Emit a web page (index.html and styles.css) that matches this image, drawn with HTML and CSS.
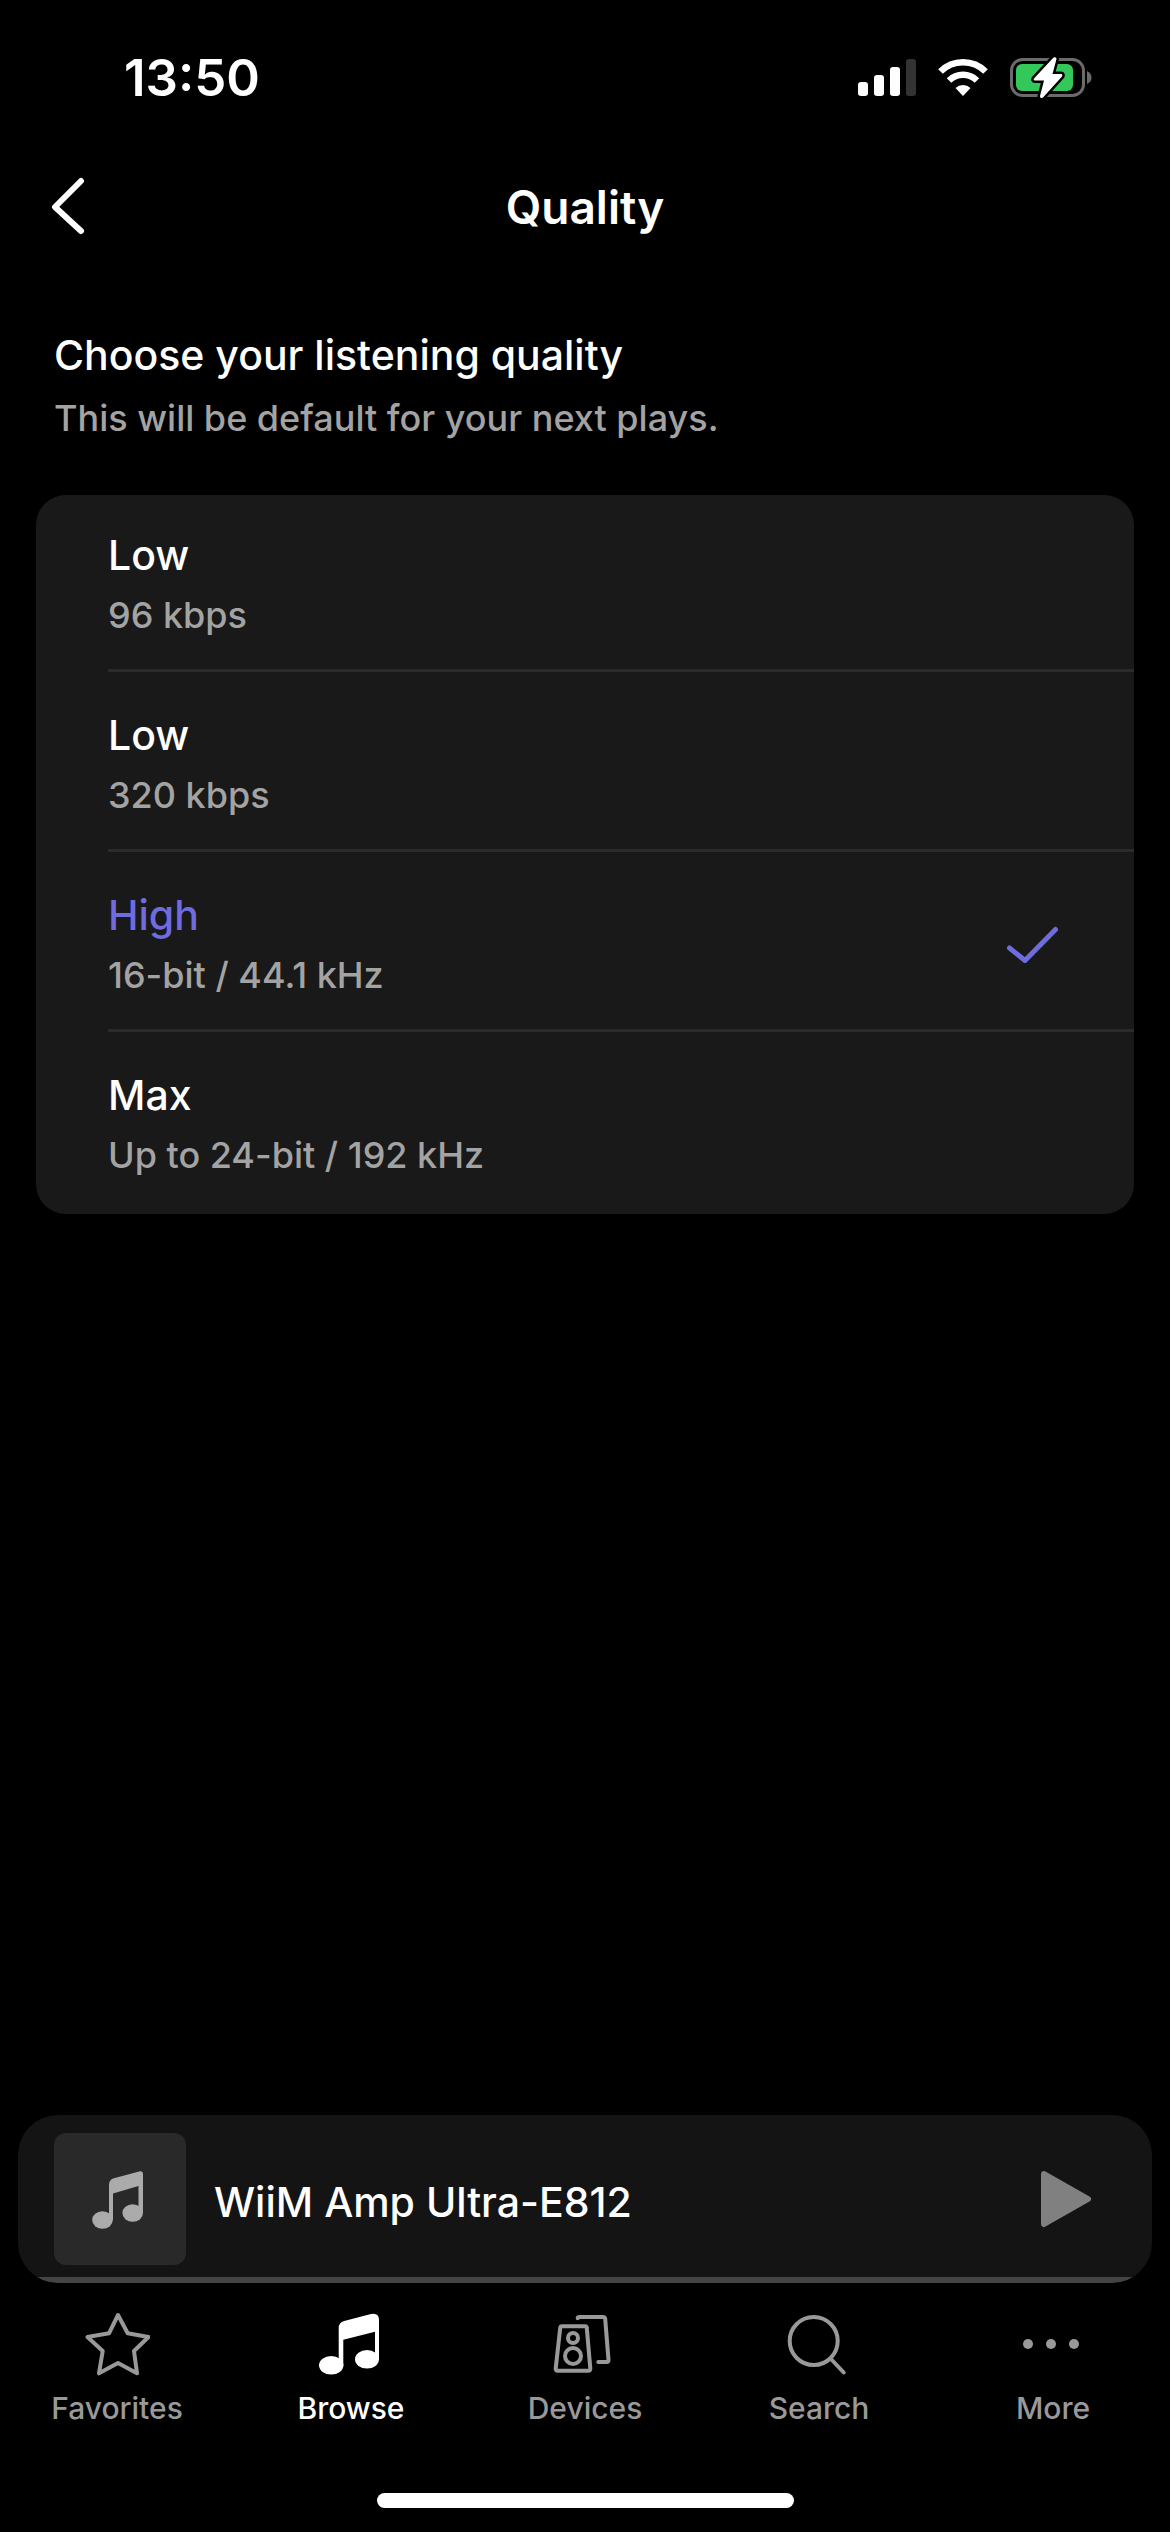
FILE: index.html
```html
<!DOCTYPE html>
<html lang="en">
<head>
    <meta charset="UTF-8">
    <meta name="viewport" content="width=device-width, initial-scale=1.0">
    <title>Quality</title>
    <link rel="stylesheet" href="styles.css">
</head>

<body>
    <div class="status">
        <span class="time">13:50</span>
        <div class="status-icons">
            <svg width="58" height="42" viewBox="0 0 58 42" fill="#fff">
                <rect x="0" y="25" width="10" height="14" rx="3"/>
                <rect x="16" y="18" width="10" height="21" rx="3"/>
                <rect x="32" y="10" width="10" height="29" rx="3"/>
                <rect x="48" y="2" width="10" height="37" rx="3" fill="#333"/>
            </svg>
            <svg width="50" height="42" viewBox="0 0 50 42" fill="none" stroke="#fff" stroke-width="6.5">
                <path d="M2.5 14.5a32 32 0 0 1 45 0"/>
                <path d="M11 23.5a20 20 0 0 1 28 0"/>
                <path d="M17.5 31a11 11 0 0 1 15 0L25 39z" fill="#fff" stroke="none"/>
            </svg>
            <svg width="82" height="42" viewBox="0 0 82 42">
                <rect x="1.5" y="2.5" width="72" height="36" rx="11" fill="none" stroke="#6b6b6b" stroke-width="3"/>
                <path d="M77 14q4.500 2 4.500 6.500t-4.500 6.500z" fill="#6b6b6b"/>
                <rect x="6" y="7" width="57" height="27" rx="6" fill="#34c759"/>
                <path d="M43.500 0.500L24 21.500q-1 2 1 2h9l-4 15.500q0 3 3 1.500l19-21q1-2.500-1-2.500h-8.500l4-15q0-2.500-3-1.500z" fill="#fff" stroke="#000" stroke-width="5" paint-order="stroke"/>
            </svg>
        </div>
    </div>

    <header class="topbar">
        <button class="back" aria-label="Back">
            <svg width="36" height="60" viewBox="0 0 36 60" fill="none" stroke="#fff" stroke-width="6" stroke-linecap="round" stroke-linejoin="round">
                <path d="M31 4L5 30l26 24"/>
            </svg>
        </button>
        <h1>Quality</h1>
    </header>

    <main>
        <div class="intro">
            <h2>Choose your listening quality</h2>
            <p>This will be default for your next plays.</p>
        </div>

        <div class="options">
            <label class="option">
                <input type="radio" name="quality">
                <span class="option-body">
                    <span class="option-text">
                        <span class="name">Low</span>
                        <span class="rate">96 kbps</span>
                    </span>
                    <svg class="check" viewBox="0 0 54 38"><path d="M4.500 22L20 34.500 50.500 3.500"/></svg>
                </span>
            </label>
            <label class="option">
                <input type="radio" name="quality">
                <span class="option-body">
                    <span class="option-text">
                        <span class="name">Low</span>
                        <span class="rate">320 kbps</span>
                    </span>
                    <svg class="check" viewBox="0 0 54 38"><path d="M4.500 22L20 34.500 50.500 3.500"/></svg>
                </span>
            </label>
            <label class="option">
                <input type="radio" name="quality" checked>
                <span class="option-body">
                    <span class="option-text">
                        <span class="name">High</span>
                        <span class="rate">16-bit / 44.1 kHz</span>
                    </span>
                    <svg class="check" viewBox="0 0 54 38"><path d="M4.500 22L20 34.500 50.500 3.500"/></svg>
                </span>
            </label>
            <label class="option">
                <input type="radio" name="quality">
                <span class="option-body">
                    <span class="option-text">
                        <span class="name">Max</span>
                        <span class="rate">Up to 24-bit / 192 kHz</span>
                    </span>
                    <svg class="check" viewBox="0 0 54 38"><path d="M4.500 22L20 34.500 50.500 3.500"/></svg>
                </span>
            </label>
        </div>
    </main>

    <section class="player">
        <div class="cover">
            <svg width="52" height="58" viewBox="2 -1 52 58" overflow="visible" fill="#ababab">
                <path d="M17 14q0-5 4-6.500L48 0.300q3-0.500 3 2.500V42h-4.500V15L21 22.500V49h-4z"/>
                <ellipse cx="10.500" cy="49" rx="10.300" ry="8.700"/>
                <ellipse cx="40.700" cy="42" rx="10.300" ry="8.700"/>
            </svg>
        </div>
        <span class="device">WiiM Amp Ultra-E812</span>
        <button class="play" aria-label="Play">
            <svg width="52" height="58" viewBox="0 0 52 58" fill="#808080" stroke="#808080" stroke-width="6" stroke-linejoin="round">
                <path d="M4 4l44 25L4 54z"/>
            </svg>
        </button>
    </section>

    <nav class="tabs">
        <a class="tab" href="#">
            <svg class="tab-icon" viewBox="0 0 66 66">
                <path d="M34 5l9.700 18.300L64.500 27 50 41l3 22.300L34 53 15 63.300 18.700 41 3.500 27 25 23.300z"/>
            </svg>
            <span>Favorites</span>
        </a>
        <a class="tab active" href="#">
            <svg class="tab-icon" viewBox="0 0 66 66">
                <g fill="currentColor" stroke="none">
                    <path d="M20.700 18q0-5.500 5.500-7L52 4.200q9-2 9 5.800v40h-4V21.700l-31.700 8V56h-4.600z"/>
                    <ellipse cx="13.200" cy="55.300" rx="12.200" ry="9.300"/>
                    <ellipse cx="49" cy="49.300" rx="12" ry="9.300"/>
                </g>
            </svg>
            <span>Browse</span>
        </a>
        <a class="tab" href="#">
            <svg class="tab-icon" viewBox="0 0 66 66">
                <path d="M10 16.300h23q1.700 0 1.800 1.700l3.500 40.500q0.200 2.200-2 2.200H5.700q-2.200 0-2-2.200L8.200 18q0.200-1.700 1.800-1.700z"/>
                <circle cx="21" cy="28" r="5"/>
                <circle cx="21" cy="46" r="8"/>
                <path d="M25.700 8.300q0-1.300 2-1.300H51q2 0 2.200 2l3.300 41q0.200 2-2 2h-8.200"/>
            </svg>
            <span>Devices</span>
        </a>
        <a class="tab" href="#">
            <svg class="tab-icon" viewBox="0 0 66 66">
                <circle cx="27.700" cy="31" r="24"/>
                <path d="M45 49l12.700 13.500"/>
            </svg>
            <span>Search</span>
        </a>
        <a class="tab" href="#">
            <svg class="tab-icon" viewBox="0 0 66 66">
                <g fill="currentColor" stroke="none">
                    <circle cx="8" cy="34" r="5"/>
                    <circle cx="31" cy="34" r="5"/>
                    <circle cx="54" cy="34" r="5"/>
                </g>
            </svg>
            <span>More</span>
        </a>
    </nav>
    <div class="home-bar"></div>
</body>
</html>
```

FILE: styles.css
```css
* {
    box-sizing: border-box;
    margin: 0;
    padding: 0;
}

body {
    background-color: #000;
    color: #fff;
    display: flex;
    flex-direction: column;
    font-family: Inter, "Liberation Sans", sans-serif;
    font-weight: 500;
    min-height: 100vh;
}

svg {
    display: block;
    flex-shrink: 0;
}

button {
    background: none;
    border: none;
    cursor: pointer;
}

.status {
    align-items: center;
    display: flex;
    justify-content: space-between;
    padding: 48px 78px 33px 124px;
}

.time {
    font-size: 51px;
    font-weight: 600;
    line-height: 60px;
}

.status-icons {
    display: flex;
    gap: 22px;
}

.topbar {
    align-items: center;
    display: grid;
    grid-template-columns: 1fr auto 1fr;
    height: 132px;
    padding: 0 50px;
}

.back {
    justify-self: start;
}

.topbar h1 {
    font-size: 46px;
    font-weight: 600;
    line-height: 60px;
}

main {
    flex: 1;
    padding: 49px 36px;
}

.intro {
    margin-bottom: 47px;
    padding: 0 18px;
}

.intro h2 {
    font-size: 41px;
    font-weight: 500;
    line-height: 66px;
}

.intro p,
.rate {
    color: #a3a3a3;
    font-size: 36px;
    line-height: 60px;
}

.options {
    background-color: #191919;
    border-radius: 30px;
    overflow: hidden;
    padding-left: 72px;
}

.option {
    cursor: pointer;
    display: block;
    position: relative;
}

.option input {
    appearance: none;
    inset: 0;
    position: absolute;
}

.option-body {
    align-items: center;
    border-bottom: 3px solid #2b2b2b;
    display: flex;
    justify-content: space-between;
    padding: 33px 75px 24px 0;
}

.option:first-child .option-body {
    padding-top: 30px;
}

.option:last-child .option-body {
    border-bottom: none;
    padding-bottom: 29px;
}

.option-text {
    display: flex;
    flex-direction: column;
}

.name {
    font-size: 41px;
    line-height: 60px;
}

.check {
    fill: none;
    height: 38px;
    stroke: #6e6cdf;
    stroke-linecap: round;
    stroke-linejoin: round;
    stroke-width: 5;
    visibility: hidden;
    width: 54px;
}

input:checked + .option-body .name {
    color: #6e6cdf;
}

input:checked + .option-body .check {
    visibility: visible;
}

.player {
    align-items: center;
    background-color: #141414;
    background-image: linear-gradient(#444, #444);
    background-position: bottom;
    background-repeat: no-repeat;
    background-size: 100% 6px;
    border-radius: 40px;
    display: flex;
    gap: 28px;
    margin: 0 18px;
    padding: 18px 60px 18px 36px;
}

.cover {
    align-items: center;
    background-color: #292929;
    border-radius: 12px;
    display: flex;
    height: 132px;
    justify-content: center;
    width: 132px;
}

.device {
    flex: 1;
    font-size: 41px;
    line-height: 60px;
    padding-top: 6px;
}

.tabs {
    display: grid;
    grid-template-columns: repeat(5, 1fr);
    padding-top: 27px;
}

.tab {
    align-items: center;
    color: #999;
    display: flex;
    flex-direction: column;
    font-size: 30px;
    gap: 14px;
    line-height: 36px;
    text-decoration: none;
}

.tab.active {
    color: #fff;
}

.tab-icon {
    fill: none;
    height: 66px;
    stroke: currentColor;
    stroke-linecap: round;
    stroke-linejoin: round;
    stroke-width: 4;
    width: 66px;
}

.home-bar {
    align-self: center;
    background-color: #fff;
    border-radius: 8px;
    height: 15px;
    margin: 67px 0 24px;
    width: 417px;
}
```
